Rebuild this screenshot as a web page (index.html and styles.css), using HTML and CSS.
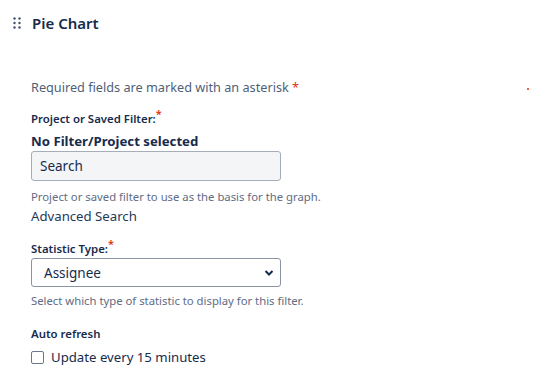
FILE: index.html
```html
<!DOCTYPE html>
<html lang="en">
<head>
<meta charset="UTF-8">
<title>Pie Chart</title>
<link rel="stylesheet" href="styles.css">
</head>
<body>
<div class="gadget">
  <div class="header">
    <span class="handle">
      <svg width="8" height="12" viewBox="0 0 8 12">
        <circle cx="1.5" cy="1.5" r="1.2"/><circle cx="6.5" cy="1.5" r="1.2"/>
        <circle cx="1.5" cy="6" r="1.2"/><circle cx="6.5" cy="6" r="1.2"/>
        <circle cx="1.5" cy="10.5" r="1.2"/><circle cx="6.5" cy="10.5" r="1.2"/>
      </svg>
    </span>
    <h2>Pie Chart</h2>
  </div>

  <form class="config">
    <div class="required-note">
      <p>Required fields are marked with an asterisk <span class="req">*</span></p>
      <span class="dot"></span>
    </div>

    <div class="field">
      <label>Project or Saved Filter:<sup class="req">*</sup></label>
      <div class="selected">No Filter/Project selected</div>
      <input type="text" class="text-input" value="Search">
      <div class="help">Project or saved filter to use as the basis for the graph.</div>
      <div class="adv">Advanced Search</div>
    </div>

    <div class="field">
      <label>Statistic Type:<sup class="req">*</sup></label>
      <div class="select">
        <span>Assignee</span>
        <svg width="10" height="8" viewBox="0 0 10 8"><path d="M1.5 2 L5 5.5 L8.5 2" fill="none" stroke="#172b4d" stroke-width="2"/></svg>
      </div>
      <div class="help">Select which type of statistic to display for this filter.</div>
    </div>

    <div class="field refresh">
      <label>Auto refresh</label>
      <label class="check"><span class="box"></span>Update every 15 minutes</label>
    </div>
  </form>
</div>
</body>
</html>
```

FILE: styles.css
```css
body {
  margin: 0;
  background: #fff;
  font-family: "Noto Sans", "Open Sans", sans-serif;
  color: #172b4d;
}

.gadget {
  padding: 12px 0 0 13px;
}

.header {
  display: flex;
  align-items: center;
  height: 22px;
}

.handle {
  display: flex;
  width: 19px;
}

.handle svg {
  fill: #42526e;
}

.header h2 {
  margin: 0;
  font-size: 15px;
  font-weight: 600;
  color: #172b4d;
}

.config {
  padding: 43px 0 0 18px;
}

.required-note {
  display: flex;
  align-items: center;
  justify-content: space-between;
  width: 498px;
  height: 20px;
}

.required-note p {
  margin: 0;
  font-size: 12.7px;
  color: #505f79;
  white-space: nowrap;
}

.req {
  color: #de350b;
}

.dot {
  width: 2px;
  height: 2px;
  border-radius: 1px;
  background: #de350b;
  margin-top: 4px;
}

.field {
  margin-top: 13px;
}

.field label {
  display: block;
  font-size: 11.4px;
  font-weight: 600;
  color: #172b4d;
  line-height: 18px;
}

.field sup {
  font-size: 11px;
  line-height: 0;
}

.selected {
  margin-top: 3px;
  font-size: 13.2px;
  font-weight: 700;
  line-height: 20px;
}

.text-input {
  display: block;
  box-sizing: border-box;
  width: 250px;
  height: 30px;
  padding: 0 8px;
  border: 1px solid #a5adba;
  border-radius: 3px;
  background: #f4f5f7;
  font-family: inherit;
  font-size: 13.5px;
  color: #172b4d;
}

.help {
  margin-top: 8px;
  font-size: 11.3px;
  color: #5e6c84;
  line-height: 16px;
}

.adv {
  font-size: 13.2px;
  color: #253858;
  line-height: 22px;
}

.select {
  box-sizing: border-box;
  width: 250px;
  height: 29px;
  display: flex;
  align-items: center;
  justify-content: space-between;
  padding: 0 6px 0 12px;
  border: 1px solid #8993a4;
  border-radius: 3px;
  font-size: 13.5px;
}

.select + .help {
  margin-top: 6px;
}

.refresh {
  margin-top: 16px;
}

.field .check {
  display: flex;
  align-items: center;
  font-size: 13.2px;
  font-weight: 400;
  line-height: 22px;
  margin-top: 3px;
}

.box {
  width: 11px;
  height: 11px;
  border: 1px solid #6b778c;
  border-radius: 2px;
  margin-right: 7px;
}
```
